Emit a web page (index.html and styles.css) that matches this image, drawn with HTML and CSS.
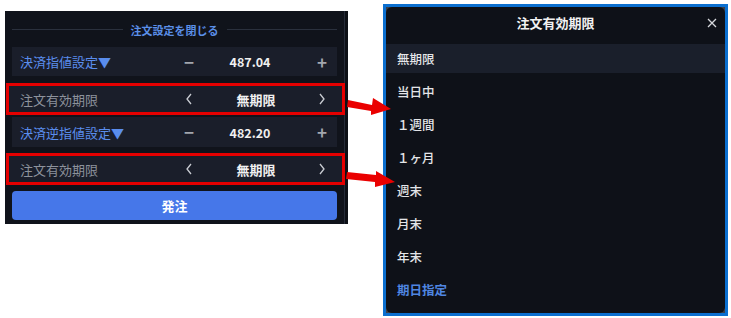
FILE: index.html
```html
<!DOCTYPE html>
<html>
<head>
<meta charset="utf-8">
<title>注文有効期限</title>
<link rel="stylesheet" href="styles.css">
</head>
<body>
<div class="shot">
	<div class="order-panel">
		<div class="panel-title"><span>注文設定を閉じる</span></div>
		<div class="row">
			<span class="label label-blue">決済指値設定▼</span>
			<span class="step">−</span>
			<span class="val">487.04</span>
			<span class="step">+</span>
		</div>
		<div class="row row-mark">
			<span class="label">注文有効期限</span>
			<span class="step"><svg width="8" height="12" viewBox="0 0 8 12"><polyline points="6,1 2,6 6,11" /></svg></span>
			<span class="val">無期限</span>
			<span class="step"><svg width="8" height="12" viewBox="0 0 8 12"><polyline points="2,1 6,6 2,11" /></svg></span>
		</div>
		<div class="row row-3">
			<span class="label label-blue">決済逆指値設定▼</span>
			<span class="step">−</span>
			<span class="val">482.20</span>
			<span class="step">+</span>
		</div>
		<div class="row row-mark row-mark2">
			<span class="label">注文有効期限</span>
			<span class="step"><svg width="8" height="12" viewBox="0 0 8 12"><polyline points="6,1 2,6 6,11" /></svg></span>
			<span class="val">無期限</span>
			<span class="step"><svg width="8" height="12" viewBox="0 0 8 12"><polyline points="2,1 6,6 2,11" /></svg></span>
		</div>
		<button class="submit">発注</button>
	</div>

	<div class="modal-frame">
		<div class="modal">
			<div class="modal-head">
				注文有効期限
				<svg class="close" width="10" height="10" viewBox="0 0 10 10"><path d="M1 1L9 9M9 1L1 9" /></svg>
			</div>
			<ul class="opts">
				<li class="on">無期限</li>
				<li>当日中</li>
				<li>１週間</li>
				<li>１ヶ月</li>
				<li>週末</li>
				<li>月末</li>
				<li>年末</li>
				<li class="pick">期日指定</li>
			</ul>
		</div>
	</div>

	<svg class="arrows" width="731" height="318" viewBox="0 0 731 318">
		<polygon points="348,100 372,105 373,98 391,109 371,115 371,111 347,107" />
		<polygon points="347,172 376,175 376,171 395,182 375,187 375,182 346,179" />
	</svg>
</div>
</body>
</html>
```

FILE: styles.css
```css
*{margin:0;padding:0;box-sizing:border-box;}
body{background:#fff;font-family:"Noto Sans CJK JP","Noto Sans",sans-serif;}
li{list-style:none;}
.shot{
	position:relative;
	display:flex;
	align-items:flex-start;
	width:731px;
	height:318px;
}
.order-panel{
	margin:11px 0 0 5px;
	width:343px;
	height:213px;
	padding:0 11px 0 7px;
	background:linear-gradient(to right,#10131b 339px,#262c39 339px,#262c39 340px,#0d1016 340px);
}
.panel-title{
	height:36px;
	display:flex;
	align-items:center;
	padding-top:1px;
}
.panel-title::before,.panel-title::after{
	content:"";
	flex:1;
	height:1px;
	background:#2a303d;
}
.panel-title span{
	padding:0 8px;
	font-size:11px;
	font-weight:bold;
	color:#5b8fe8;
	line-height:14px;
}
.row{
	display:grid;
	grid-template-columns:1fr 30px 92px 41px;
	align-items:center;
	height:29px;
	padding-left:8px;
	background:#1a1e2a;
	color:#a7abb3;
}
.row > .step:last-child{margin-left:11px;}
.row-3{margin-top:2px;height:30px;}
.label{font-size:13px;color:#8d929c;white-space:nowrap;}
.label-blue{color:#5a8ded;}
.step{
	text-align:center;
	font-size:17px;
	font-weight:bold;
	line-height:18px;
	color:#a3a7ae;
}
.step svg{display:block;margin:0 auto;}
.step polyline{fill:none;stroke:#c9ccd2;stroke-width:1.3;}
.val{
	text-align:center;
	font-size:12.5px;
	font-weight:bold;
	color:#f0f0f0;
}
.row-mark{
	height:32px;
	margin:7px -8px 0 -6px;
	border:3px solid #e50000;
	padding-left:11px;
	grid-template-columns:1fr 30px 104px 28px;
	padding-right:6px;
}
.row-mark > .step:last-child{margin-left:0;}
.row-mark .val{font-size:13px;}
.row-mark2{margin-top:6px;}
.submit{
	display:block;
	width:100%;
	height:29px;
	margin-top:6px;
	border:none;
	border-radius:4px;
	background:#4677e9;
	color:#fff;
	font-family:inherit;
	font-size:13px;
	font-weight:bold;
}
.modal-frame{
	margin:4px 0 0 35px;
	width:345px;
	height:312px;
	border:3px solid #0b6fcf;
	background:#3a3f49;
}
.modal{
	height:100%;
	border-radius:6px;
	background:#0e1118;
	overflow:hidden;
}
.modal-head{
	position:relative;
	height:37px;
	line-height:31px;
	text-align:center;
	font-size:13px;
	font-weight:bold;
	color:#f2f2f2;
}
.close{position:absolute;right:8px;top:11px;}
.close path{stroke:#d6d8dc;stroke-width:1.3;fill:none;}
.opts li{
	height:29px;
	margin-bottom:4px;
	padding-left:11px;
	line-height:30px;
	font-size:12.5px;
	font-weight:500;
	color:#e4e5e8;
}
.opts li.on{background:#1a1f2b;}
.opts li.pick{color:#4f86e2;font-weight:bold;}
.arrows{position:absolute;left:0;top:0;pointer-events:none;}
.arrows polygon{fill:#ea0000;}
```
